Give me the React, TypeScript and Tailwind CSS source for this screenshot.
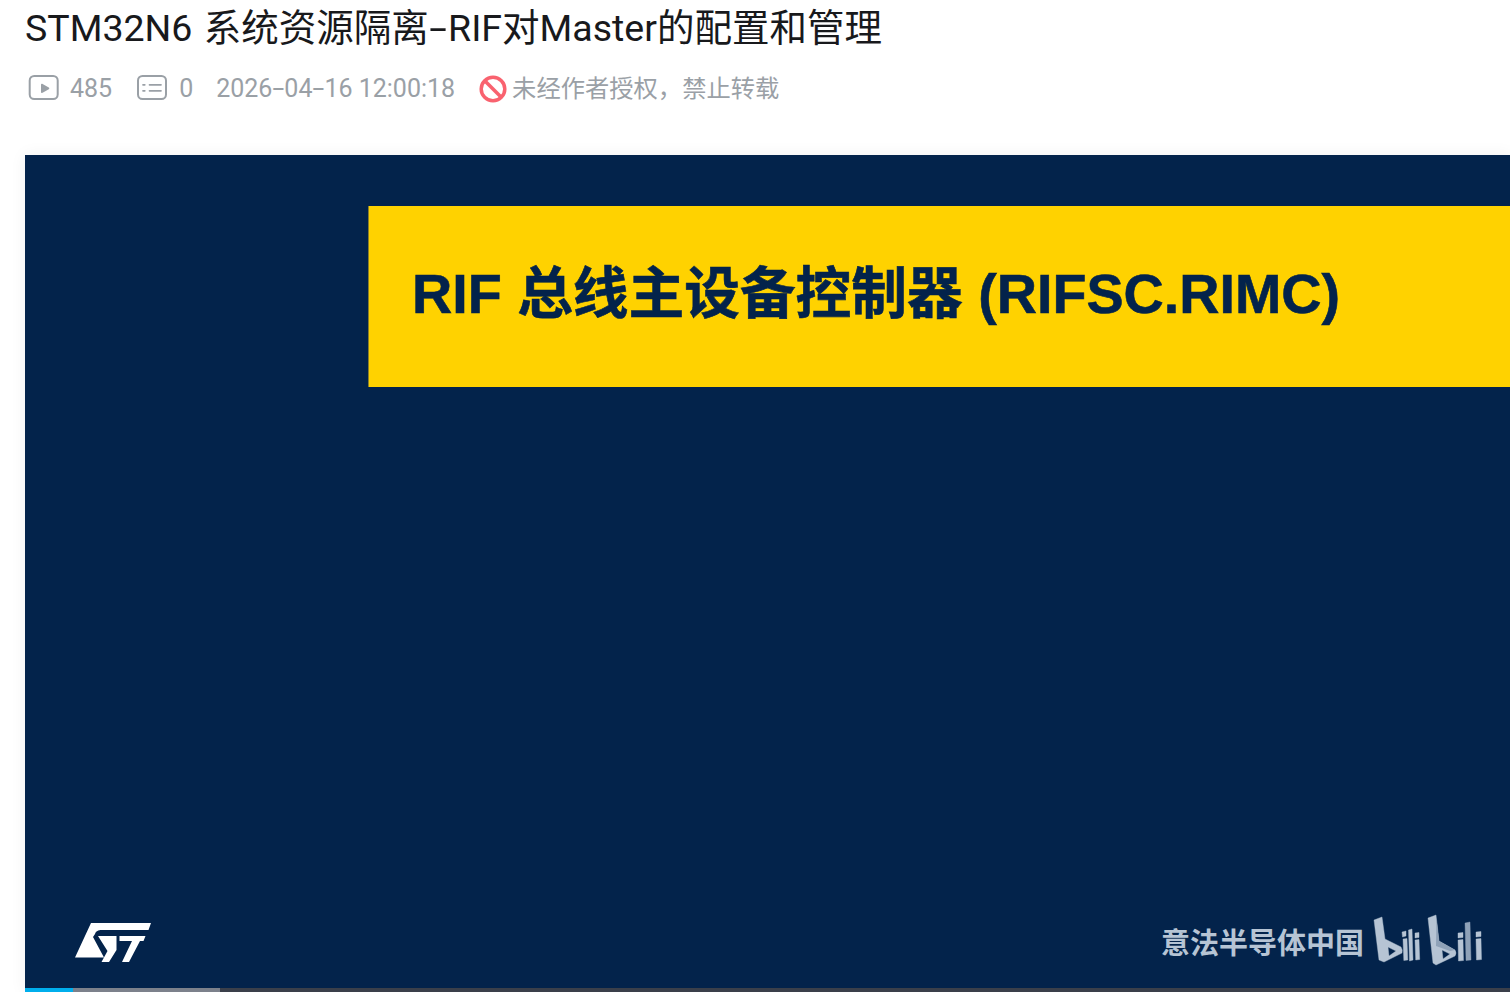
function Dash({ className }: { className: string }) {
  return <span className={"inline-block scale-x-[1.7] " + className}>-</span>
}

function PlayIcon() {
  return (
    <svg width="32" height="28" viewBox="0 0 32 28" fill="none">
      <rect x="2.7" y="1" width="28" height="23" rx="4.5" stroke="#9aa0a6" strokeWidth="2" />
      <path d="M14 9.8c0-.9.9-1.300 1.600-.9l6.200 3.700c.7.400.7 1.300 0 1.700l-6.200 3.500c-.7.400-1.600 0-1.600-.9z" fill="#9aa0a6" />
    </svg>
  )
}

function CommentIcon() {
  return (
    <svg width="32" height="28" viewBox="0 0 32 28" fill="none">
      <rect x="2" y="1" width="28" height="23" rx="4.5" stroke="#9aa0a6" strokeWidth="2" />
      <path d="M13.500 9.800h11.500M13.500 15.800h11.500" stroke="#9aa0a6" strokeWidth="1.700" strokeLinecap="round" />
      <path d="M7 9.800h1.800M7 15.800h1.800" stroke="#9aa0a6" strokeWidth="1.700" strokeLinecap="round" />
    </svg>
  )
}

function BanIcon() {
  return (
    <svg width="28" height="28" viewBox="0 0 28 28" fill="none">
      <circle cx="14" cy="14" r="11.800" stroke="#f9626f" strokeWidth="3.500" />
      <path d="M6 6l16 16" stroke="#f9626f" strokeWidth="3.500" />
    </svg>
  )
}

function StLogo() {
  return (
    <svg width="86" height="50" viewBox="0 0 86 50" fill="#ffffff">
      <path d="M21 5H81L78.500 12H32C28 12 26 13 25 16L23 19L34 39.500H5Z" />
      <path d="M28 18H46.500V32L39 44H31.500L37.500 33Z" />
      <path d="M49.500 18H75.500L73.500 23H70L59 44H52L62 23H49.500Z" />
    </svg>
  )
}

function BiliLogo() {
  return (
    <svg width="120" height="56" viewBox="0 0 120 56" fill="#b6c4d4" stroke="#b6c4d4" strokeWidth="0.4" strokeLinejoin="round">
      <path d="M4 8L12 5L15 27L31 35Q33 38 32 41L14 50L9 48ZM18 35L19 44L26 39Z" fillRule="evenodd" />
      <path d="M32 20l4-1v5l-3.500 1zM33 27l4-.5.800 21.500-4 .5z" />
      <path d="M38.500 18l3.500-1 1 31-3.500 1z" />
      <path d="M45 21l4-.5v5l-4 .5zM45 28l4-.5.700 20-4 .5z" />
      <path d="M58 6L66 3L69 29L85 38Q87 41 85 44L66 53L63 51ZM72 38L73 47L80 42Z" fillRule="evenodd" />
      <path d="M66.500 6L69 29L85 38L80 39L66 34Z" fill="#8fa2b8" stroke="none" />
      <path d="M88 21l5-.5v5l-5 .5zM88 28l5-.5.500 21-5 .5z" />
      <path d="M95 11l5-1 1 38-5 .5z" fill="#8fa2b8" stroke="#8fa2b8" />
      <path d="M106 20l5-.5v5l-5 .5zM106 27l5-.5.500 21-5 .5z" />
    </svg>
  )
}

export default function App() {
  return (
    <div className="h-[992px] w-[1510px] overflow-hidden bg-white font-['Roboto','Noto_Sans_CJK_SC',sans-serif]">
      <h1 className="pb-[4px] pl-[25px] text-[37.5px] leading-[56px] font-normal [word-spacing:2px] whitespace-nowrap text-[#18191c]">
        STM32N6 系统资源隔离<Dash className="mx-[4.500px]" />RIF对Master的配置和管理
      </h1>
      <div className="flex h-[58px] items-center pl-[27px] text-[25px] whitespace-nowrap text-[#9aa0a6]">
        <PlayIcon />
        <span className="ml-[11px]">485</span>
        <span className="ml-[24px] flex"><CommentIcon /></span>
        <span className="ml-[11px]">0</span>
        <span className="ml-[23px]">
          2026<Dash className="mx-[2.500px]" />04<Dash className="mx-[2.500px]" />16 12:00:18
        </span>
        <span className="ml-[24px] flex"><BanIcon /></span>
        <span className="ml-[5px] text-[24.300px]">未经作者授权，禁止转载</span>
      </div>
      <div className="mt-[37px] ml-[25px] flex h-[837px] flex-col bg-[#03234b] shadow-[0_0_16px_rgba(0,0,0,0.06)]">
        <div className="mt-[51px] ml-[343px] flex h-[181px] items-center border-l border-[#8a7f2a] bg-[#ffd200] pb-[4px] pl-[43px]">
          <span className="font-['Liberation_Sans','Noto_Sans_CJK_SC',sans-serif] text-[55.700px] font-bold whitespace-nowrap text-[#03234b] [-webkit-text-stroke:0.6px_#03234b]">
            RIF 总线主设备控制器 (RIFSC.RIMC)
          </span>
        </div>
        <div className="mt-auto flex items-end justify-between pr-[20px] pb-[20px] pl-[45px]">
          <StLogo />
          <div className="flex items-center gap-[6px]">
            <span className="mt-[10px] text-[29px] font-bold text-[#b6c4d4]">意法半导体中国</span>
            <BiliLogo />
          </div>
        </div>
        <div className="flex h-[4px] bg-[#3a3f4a]">
          <div className="w-[48px] bg-[#00aeec]" />
          <div className="w-[147px] bg-[#7c818b]" />
        </div>
      </div>
    </div>
  )
}
